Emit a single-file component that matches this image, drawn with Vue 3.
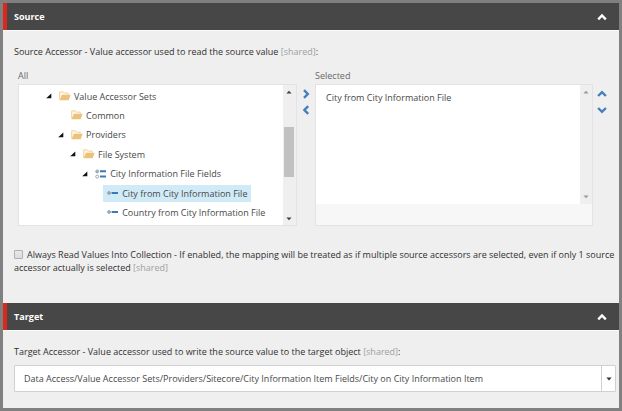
<script setup>
const nodes = [
  { label: 'Value Accessor Sets', level: 0, icon: 'folder', open: true },
  { label: 'Common', level: 1, icon: 'folder', open: false },
  { label: 'Providers', level: 1, icon: 'folder', open: true },
  { label: 'File System', level: 2, icon: 'folder', open: true },
  { label: 'City Information File Fields', level: 3, icon: 'fields', open: true },
  { label: 'City from City Information File', level: 4, icon: 'field', open: false, selected: true },
  { label: 'Country from City Information File', level: 4, icon: 'field', open: false },
]
</script>

<template>
  <main class="window">
    <header class="section">
      <h2>Source</h2>
      <svg class="chevron" viewBox="0 0 10 8"><path d="M1.2 6.3 5 2.5 8.8 6.3" /></svg>
    </header>
    <section class="source">
      <p class="caption first">Source Accessor - Value accessor used to read the source value <i>[shared]</i>:</p>
      <div class="picker">
        <div class="column">
          <div class="heading">All</div>
          <div class="box">
            <ul class="tree">
              <li v-for="n in nodes" :key="n.label" :style="{ paddingLeft: n.level * 12.05 + 27 + 'px' }">
                <span class="toggle"><svg v-if="n.open" viewBox="0 0 6 6"><path d="M5.3 .4V5.3H.2Z" /></svg></span>
                <span class="node" :class="{ selected: n.selected }">
                  <svg v-if="n.icon === 'folder'" viewBox="0 0 12 10">
                    <path d="M.7 8.8V.8H4.2L5.4 2.1H9.2V3.7" fill="#fff6e5" stroke="#efcf96" stroke-width=".9" />
                    <path d="M3 3.7H11.6L9.7 9.2H.6Z" fill="#ecc27b" />
                  </svg>
                  <svg v-else-if="n.icon === 'fields'" viewBox="0 0 12 10">
                    <circle cx="2.2" cy="2.4" r="1.5" fill="#a9b4bd" stroke="#8996a0" stroke-width=".7" />
                    <circle cx="2.2" cy="7.6" r="1.5" fill="#fff" stroke="#8996a0" stroke-width=".8" />
                    <path d="M5 1.3h6v2H5zM5 6.6h6v2H5z" fill="#3c78b8" />
                  </svg>
                  <svg v-else viewBox="0 0 12 10">
                    <circle cx="2" cy="5" r="1.4" fill="#a3b0ba" stroke="#8494a0" stroke-width=".7" />
                    <path d="M3.5 4.7h1.3v.6H3.5zM4.8 4h6.2v2H4.8z" fill="#3c78b8" />
                  </svg>
                  <span class="text">{{ n.label }}</span>
                </span>
              </li>
            </ul>
            <div class="bar">
              <svg viewBox="0 0 6 4"><path d="M.4 3.5 3 .7 5.6 3.5Z" /></svg>
              <div class="track"><div class="thumb"></div></div>
              <svg viewBox="0 0 6 4"><path d="M.4.5 3 3.3 5.6.5Z" /></svg>
            </div>
          </div>
        </div>
        <div class="arrows">
          <svg viewBox="0 0 8 10"><path d="M2 1.2 5.8 5 2 8.8" /></svg>
          <svg viewBox="0 0 8 10"><path d="M6.2 1.2 2.4 5 6.2 8.8" /></svg>
        </div>
        <div class="column narrow">
          <div class="heading">Selected</div>
          <div class="box chosen">
            <div class="list"><span>City from City Information File</span></div>
            <div class="bar muted">
              <svg viewBox="0 0 6 4"><path d="M.4 3.5 3 .7 5.6 3.5Z" /></svg>
              <svg viewBox="0 0 6 4"><path d="M.4.5 3 3.3 5.6.5Z" /></svg>
            </div>
          </div>
        </div>
        <div class="arrows order">
          <svg viewBox="0 0 10 8"><path d="M1.1 6 5 2.2 8.9 6" /></svg>
          <svg viewBox="0 0 10 8"><path d="M1.1 2 5 5.8 8.9 2" /></svg>
        </div>
      </div>
      <div class="option">
        <span class="check"></span><span class="line-one">Always Read Values Into Collection - If enabled, the mapping will be treated as if multiple source accessors are selected, even if only 1 source</span>
        <div class="line-two">accessor actually is selected <i>[shared]</i></div>
      </div>
    </section>
    <header class="section">
      <h2>Target</h2>
      <svg class="chevron" viewBox="0 0 10 8"><path d="M1.2 6.3 5 2.5 8.8 6.3" /></svg>
    </header>
    <section class="target">
      <p class="caption second">Target Accessor - Value accessor used to write the source value to the target object <i>[shared]</i>:</p>
      <div class="combo">
        <span class="value">Data Access/Value Accessor Sets/Providers/Sitecore/City Information Item Fields/City on City Information Item</span>
        <span class="drop"><svg viewBox="0 0 6 4"><path d="M.4.5 3 3.4 5.6.5Z" /></svg></span>
      </div>
    </section>
  </main>
</template>

<style>
body { margin: 0; background: #808080; }
</style>
<style scoped>
* { box-sizing: border-box; }
.window {
  width: 622px; height: 411px; padding: 3px; overflow: hidden;
  border: 0; background: #efefef; box-shadow: inset 0 0 0 3px #808080;
  font: 9.015px/13px "Open Sans", "Noto Sans", sans-serif; color: #303030; white-space: nowrap;
}
i { font-style: normal; color: #a0a0a0; }
svg { display: block; }
.section {
  display: flex; align-items: center; justify-content: space-between; height: 27px;
  padding: 0 12.5px 0 7px; background: #474747; border-left: 4px solid #da291c; box-shadow: 0 1px #fafafa;
}
h2 { margin: 0; font-size: 9.04px; line-height: 13px; font-weight: 700; color: #fff; }
.chevron { width: 10px; height: 8px; }
.chevron path, .arrows path { fill: none; stroke: #fff; stroke-width: 2.4; }
.source { height: 273px; padding: 15px 0 0 11px; }
.caption { margin: 0; height: 13px; }
.picker { display: flex; padding: 11px 0 0 4px; }
.column { width: 279px; }
.column.narrow { width: 278px; }
.heading { height: 15px; color: #686868; }
.box {
  display: flex; height: 142px; border: 1px solid #e3e3e3; background: #fff; overflow: hidden;
}
.tree { flex: 1; margin: 0; padding: 1.4px 0 0; list-style: none; color: #484848; }
.tree li { display: flex; align-items: center; height: 19.4px; }
.toggle { width: 9px; }
.toggle svg { width: 6px; height: 6px; fill: #111; }
.node { display: flex; align-items: center; gap: 3px; height: 17px; padding: 0 4px; }
.node svg { width: 12px; height: 10px; }
.node.selected { background: #d0ebf7; }
.bar { display: flex; flex-direction: column; justify-content: space-between; align-items: center; width: 13px; padding: 5px 1px 4px 0; background: #efefef; }
.bar svg { width: 6px; height: 4px; fill: #404040; }
.track { flex: 1; width: 10px; padding-top: 33px; }
.thumb { height: 50px; background: #c1c1c1; }
.arrows { width: 18px; padding: 20px 0 0 5px; }
.arrows svg { width: 8px; height: 10px; margin-bottom: 5.5px; }
.arrows path { stroke: #437fbd; }
.arrows.order { padding: 21px 0 0 4px; }
.arrows.order svg { width: 10px; height: 8px; margin-bottom: 7.5px; }
.chosen { background: #f7f7f7; }
.list { flex: 1; height: 119px; padding: 6px 10px; background: #fff; color: #484848; }
.bar.muted { width: 12px; height: 119px; padding: 5px 0; }
.muted svg { fill: #999; }
.option { padding-top: 22px; }
.check {
  display: inline-block; width: 9px; height: 9px; margin-right: 4px; vertical-align: -1px;
  border: 1px solid #b0b0b0; border-radius: 1px; background: linear-gradient(#e8e8e8, #dcdcdc);
}
.target { padding: 15px 3px 0 11px; }
.combo { display: flex; margin-top: 7px; height: 27px; border: 1px solid #d0d0d0; border-radius: 1px; background: #fff; }
.value { flex: 1; padding: 6px 9px; color: #484848; }
.drop { display: grid; place-items: center; width: 14px; border-left: 1px solid #d0d0d0; }
.drop svg { width: 6px; height: 4px; fill: #333; }
</style>
